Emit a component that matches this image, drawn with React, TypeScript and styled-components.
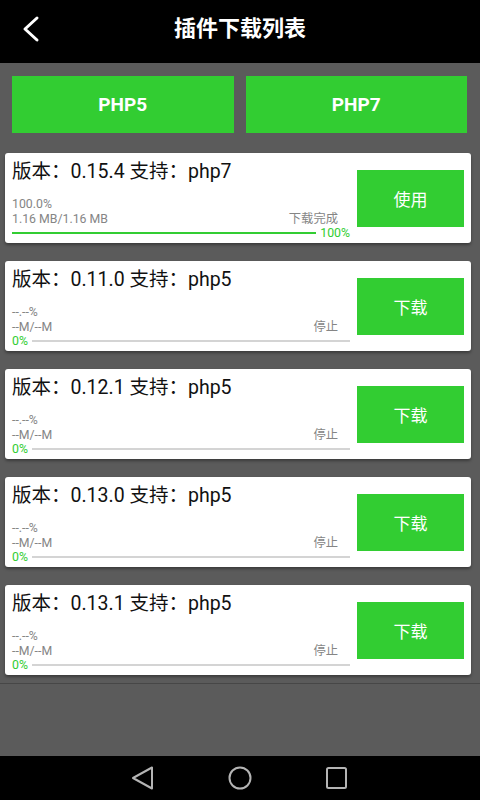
import React from 'react';
import styled, { createGlobalStyle } from 'styled-components';

const GREEN = '#32cd32';

const GlobalStyle = createGlobalStyle`
  html, body {
    margin: 0;
    padding: 0;
    background: #5b5b5b;
  }
  body {
    font-family: Roboto, "Noto Sans CJK SC", sans-serif;
  }
  * {
    box-sizing: border-box;
  }
`;

const Screen = styled.div`
  width: 480px;
  height: 800px;
  display: flex;
  flex-direction: column;
  background: #5b5b5b;
  overflow: hidden;
`;

const Header = styled.div`
  height: 63px;
  flex-shrink: 0;
  background: #000;
  display: grid;
  grid-template-columns: 56px 1fr 56px;
  align-items: center;
  padding-bottom: 6px;
`;

const BackButton = styled.div`
  display: flex;
  align-items: center;
  padding-left: 18px;
`;

const Title = styled.h1`
  margin: 0;
  text-align: center;
  color: #fff;
  font-size: 22px;
  font-weight: 700;
  line-height: 30px;
`;

const TabRow = styled.div`
  display: grid;
  grid-template-columns: 1fr 1fr;
  gap: 12px;
  padding: 13px 13px 0 12px;
`;

const TabButton = styled.div`
  height: 57px;
  background: ${GREEN};
  color: #fff;
  font-size: 19px;
  font-weight: 700;
  display: flex;
  align-items: center;
  justify-content: center;
`;

const List = styled.div`
  display: flex;
  flex-direction: column;
  gap: 18px;
  padding: 20px 9px 8px 5px;
  border-bottom: 1px solid #474747;
`;

const Card = styled.div`
  height: 90px;
  background: #fff;
  border-radius: 3px;
  box-shadow: 0 2px 3px rgba(0, 0, 0, 0.35);
  display: flex;
  align-items: center;
  padding: 0 7px;
  gap: 7px;
`;

const Info = styled.div`
  flex: 1;
  align-self: stretch;
  display: flex;
  flex-direction: column;
  padding-top: 6px;
`;

const Version = styled.div`
  font-size: 19.5px;
  line-height: 26px;
  color: #111;
  margin-bottom: 12px;
  white-space: nowrap;
`;

const MetaLine = styled.div`
  display: flex;
  justify-content: space-between;
  font-size: 12.3px;
  line-height: 14.5px;
  color: #858585;
  padding-right: 12px;
`;

const Progress = styled.div`
  display: flex;
  align-items: center;
  height: 14.5px;
`;

const Fill = styled.div`
  height: 2px;
  width: 0;
  background: ${GREEN};
`;

const Track = styled.div`
  height: 2px;
  width: 0;
  background: #d4d4d4;
`;

const ProgressLabel = styled.span<{ $done: boolean }>`
  font-size: 12.3px;
  line-height: 14.5px;
  color: ${GREEN};
  padding: ${(p) => (p.$done ? '0 0 0 4px' : '0 4px 0 0')};
`;

const ActionButton = styled.div`
  width: 107px;
  height: 57px;
  flex-shrink: 0;
  background: ${GREEN};
  color: #fff;
  font-size: 17px;
  display: flex;
  align-items: center;
  justify-content: center;
`;

const Spacer = styled.div`
  flex: 1;
`;

const NavBar = styled.div`
  height: 44px;
  flex-shrink: 0;
  background: #000;
  display: flex;
  justify-content: center;
  align-items: center;
`;

const NavSlot = styled.div`
  width: 97px;
  display: flex;
  justify-content: center;
  align-items: center;
`;

type Plugin = {
  version: string;
  php: string;
  percent: string;
  size: string;
  status: string;
  progress: number;
  action: string;
};

const plugins: Plugin[] = [
  { version: '0.15.4', php: 'php7', percent: '100.0%', size: '1.16 MB/1.16 MB', status: '下载完成', progress: 1, action: '使用' },
  { version: '0.11.0', php: 'php5', percent: '--.--%', size: '--M/--M', status: '停止', progress: 0, action: '下载' },
  { version: '0.12.1', php: 'php5', percent: '--.--%', size: '--M/--M', status: '停止', progress: 0, action: '下载' },
  { version: '0.13.0', php: 'php5', percent: '--.--%', size: '--M/--M', status: '停止', progress: 0, action: '下载' },
  { version: '0.13.1', php: 'php5', percent: '--.--%', size: '--M/--M', status: '停止', progress: 0, action: '下载' },
];

const App: React.FC = () => {
  return (
    <Screen>
      <GlobalStyle />
      <Header>
        <BackButton>
          <svg width="24" height="32" viewBox="0 0 24 32">
            <path d="M19 5 L7 16 L19 27" fill="none" stroke="#fff" strokeWidth="3" strokeLinecap="round" strokeLinejoin="round" />
          </svg>
        </BackButton>
        <Title>插件下载列表</Title>
        <div />
      </Header>

      <TabRow>
        <TabButton>PHP5</TabButton>
        <TabButton>PHP7</TabButton>
      </TabRow>

      <List>
        {plugins.map((p) => (
          <Card key={p.version}>
            <Info>
              <Version>版本：{p.version} 支持：{p.php}</Version>
              <MetaLine>
                <span>{p.percent}</span>
              </MetaLine>
              <MetaLine>
                <span>{p.size}</span>
                <span>{p.status}</span>
              </MetaLine>
              <Progress>
                <Fill style={{ flexGrow: p.progress }} />
                <ProgressLabel $done={p.progress >= 1}>{Math.round(p.progress * 100)}%</ProgressLabel>
                <Track style={{ flexGrow: 1 - p.progress }} />
              </Progress>
            </Info>
            <ActionButton>{p.action}</ActionButton>
          </Card>
        ))}
      </List>

      <Spacer />

      <NavBar>
        <NavSlot>
          <svg width="24" height="26" viewBox="0 0 24 26">
            <path d="M21 2.5 L21 23.5 L2 13 Z" fill="none" stroke="#b4b4b4" strokeWidth="2" strokeLinejoin="round" />
          </svg>
        </NavSlot>
        <NavSlot>
          <svg width="26" height="26" viewBox="0 0 26 26">
            <circle cx="13" cy="13" r="10.5" fill="none" stroke="#b4b4b4" strokeWidth="2" />
          </svg>
        </NavSlot>
        <NavSlot>
          <svg width="24" height="24" viewBox="0 0 24 24">
            <rect x="2" y="2" width="19" height="20" rx="1.5" fill="none" stroke="#b4b4b4" strokeWidth="2" />
          </svg>
        </NavSlot>
      </NavBar>
    </Screen>
  );
};

export default App;
